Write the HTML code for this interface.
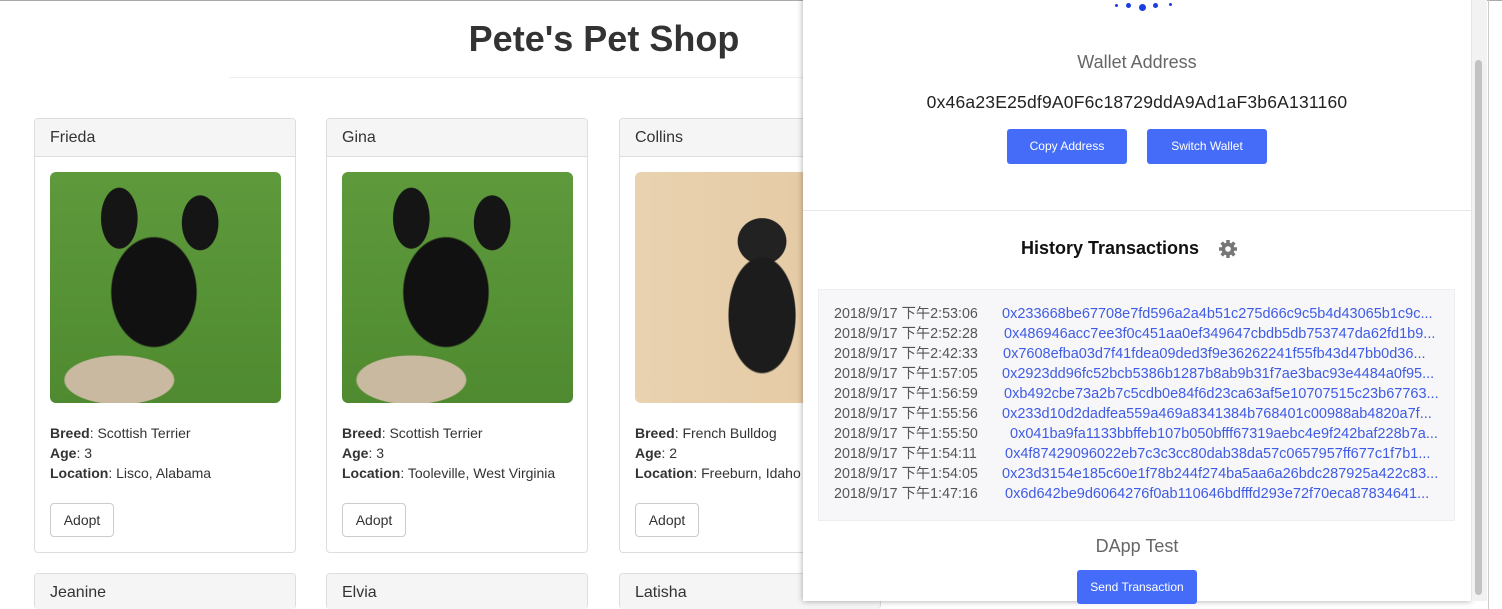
<!DOCTYPE html><html><head><meta charset="utf-8"><style>
html{height:609px;overflow:hidden}
body{margin:0;width:1502px;height:609px;overflow:hidden;background:#fff;font-family:"Liberation Sans",Arial,sans-serif;color:#333;position:relative}
.topl{position:absolute;left:0;top:0;width:1502px;height:1px;background:#aaa}
h1{position:absolute;left:0;width:1208px;top:18px;margin:0;text-align:center;font-size:36px;font-weight:bold;color:#333}
.hr{position:absolute;left:229px;top:77px;width:800px;height:1px;background:#eee}
.card{position:absolute;width:260px;height:433px;border:1px solid #ddd;border-radius:4px;background:#fff}
.card.s{height:35px;border-bottom:none;overflow:hidden}
.hd{height:37px;background:#f5f5f5;border-bottom:1px solid #ddd;font-size:16px;line-height:37px;padding-left:15px;color:#333;border-radius:4px 4px 0 0}
.img{position:absolute;left:15px;top:53px;width:231px;height:231px;border-radius:6px;overflow:hidden}
.terr{background:radial-gradient(ellipse 70px 90px at 45% 52%,#111 60%,transparent 62%),radial-gradient(ellipse 30px 50px at 30% 20%,#151515 60%,transparent 62%),radial-gradient(ellipse 30px 45px at 65% 22%,#151515 60%,transparent 62%),radial-gradient(ellipse 90px 40px at 30% 90%,#c9b9a0 60%,transparent 62%),linear-gradient(#5e9a3c,#4f8a30)}
.bull{background:radial-gradient(ellipse 55px 95px at 55% 62%,#1c1c1c 60%,transparent 62%),radial-gradient(ellipse 40px 38px at 55% 30%,#222 60%,transparent 62%),linear-gradient(90deg,#e9d2b0,#e4c9a2)}
.info{position:absolute;left:15px;top:304px;font-size:14px;line-height:20px}
.btn{position:absolute;left:15px;top:384px;width:62px;height:32px;border:1px solid #ccc;border-radius:4px;font-size:14px;line-height:32px;text-align:center}
.pop{position:absolute;left:803px;top:-2px;width:668px;height:603px;background:#fff;box-shadow:0 0 6px rgba(0,0,0,.35);font-family:"Liberation Sans","Noto Sans CJK SC",sans-serif}
.c{position:absolute;left:0;width:668px;text-align:center}
.bb{position:absolute;width:120px;height:35px;background:#456cf8;color:#fff;border-radius:3px;font-size:12px;line-height:35px;text-align:center}
.box{position:absolute;left:15px;top:291px;width:635px;height:230px;background:#f7f7f9;border:1px solid #eee}
.row{position:absolute;left:15px;font-size:14.3px;line-height:20px;white-space:nowrap;color:#555}
.row span{position:absolute;color:#3f5be5;font-size:14.5px}
.sb{position:absolute;left:1471px;top:0;width:15px;height:601px;background:#f2f2f2;border-left:1px solid #e5e5e5}
.th{position:absolute;left:1475px;top:60px;width:7px;height:535px;background:#c2c2c2;border-radius:4px}
.dot{position:absolute;background:#1a3fe0;border-radius:50%}
</style></head><body>
<div class="topl"></div>
<h1>Pete's Pet Shop</h1>
<div class="hr"></div>
<div class="card" style="left:34px;top:118px"><div class="hd">Frieda</div><div class="img terr"></div><div class="info"><b>Breed</b>: Scottish Terrier<br><b>Age</b>: 3<br><b>Location</b>: Lisco, Alabama</div><div class="btn">Adopt</div></div>
<div class="card" style="left:326px;top:118px"><div class="hd">Gina</div><div class="img terr"></div><div class="info"><b>Breed</b>: Scottish Terrier<br><b>Age</b>: 3<br><b>Location</b>: Tooleville, West Virginia</div><div class="btn">Adopt</div></div>
<div class="card" style="left:619px;top:118px"><div class="hd">Collins</div><div class="img bull"></div><div class="info"><b>Breed</b>: French Bulldog<br><b>Age</b>: 2<br><b>Location</b>: Freeburn, Idaho</div><div class="btn">Adopt</div></div>
<div class="card s" style="left:34px;top:573px"><div class="hd">Jeanine</div></div>
<div class="card s" style="left:326px;top:573px"><div class="hd">Elvia</div></div>
<div class="card s" style="left:619px;top:573px"><div class="hd">Latisha</div></div>
<div style="position:absolute;left:1488px;top:0;width:1px;height:609px;background:#ccc"></div>
<div class="pop">
<div class="dot" style="left:312px;top:6px;width:3px;height:3px"></div><div class="dot" style="left:323px;top:5px;width:5px;height:5px"></div><div class="dot" style="left:336px;top:6px;width:7px;height:7px"></div><div class="dot" style="left:350px;top:5px;width:5px;height:5px"></div><div class="dot" style="left:366px;top:5px;width:3px;height:3px"></div>
<div class="c" style="top:54px;font-size:18px;color:#666">Wallet Address</div>
<div class="c" style="top:94px;font-size:17.5px;color:#222;letter-spacing:0.2px">0x46a23E25df9A0F6c18729ddA9Ad1aF3b6A131160</div>
<div class="bb" style="left:204px;top:131px">Copy Address</div>
<div class="bb" style="left:344px;top:131px">Switch Wallet</div>
<div style="position:absolute;left:0;top:212px;width:668px;height:1px;background:#e8e8e8"></div>
<div style="position:absolute;left:218px;top:240px;font-size:18px;font-weight:bold;color:#111">History Transactions</div>
<svg style="position:absolute;left:415px;top:241px" width="20" height="20" viewBox="0 0 20 20"><g fill="#777"><circle cx="10" cy="10" r="6.5"/><g stroke="#777" stroke-width="3.5"><line x1="10" y1="1" x2="10" y2="19"/><line x1="1" y1="10" x2="19" y2="10"/><line x1="3.6" y1="3.6" x2="16.4" y2="16.4"/><line x1="16.4" y1="3.6" x2="3.6" y2="16.4"/></g></g><circle cx="10" cy="10" r="2.8" fill="#fff"/></svg>
<div class="box">
<div class="row" style="top:14px">2018/9/17 下午2:53:06<span style="left:168px">0x233668be67708e7fd596a2a4b51c275d66c9c5b4d43065b1c9c...</span></div>
<div class="row" style="top:34px">2018/9/17 下午2:52:28<span style="left:170px">0x486946acc7ee3f0c451aa0ef349647cbdb5db753747da62fd1b9...</span></div>
<div class="row" style="top:54px">2018/9/17 下午2:42:33<span style="left:169px">0x7608efba03d7f41fdea09ded3f9e36262241f55fb43d47bb0d36...</span></div>
<div class="row" style="top:74px">2018/9/17 下午1:57:05<span style="left:168px">0x2923dd96fc52bcb5386b1287b8ab9b31f7ae3bac93e4484a0f95...</span></div>
<div class="row" style="top:94px">2018/9/17 下午1:56:59<span style="left:170px">0xb492cbe73a2b7c5cdb0e84f6d23ca63af5e10707515c23b67763...</span></div>
<div class="row" style="top:114px">2018/9/17 下午1:55:56<span style="left:168px">0x233d10d2dadfea559a469a8341384b768401c00988ab4820a7f...</span></div>
<div class="row" style="top:134px">2018/9/17 下午1:55:50<span style="left:176px">0x041ba9fa1133bbffeb107b050bfff67319aebc4e9f242baf228b7a...</span></div>
<div class="row" style="top:154px">2018/9/17 下午1:54:11<span style="left:171px">0x4f87429096022eb7c3c3cc80dab38da57c0657957ff677c1f7b1...</span></div>
<div class="row" style="top:174px">2018/9/17 下午1:54:05<span style="left:168px">0x23d3154e185c60e1f78b244f274ba5aa6a26bdc287925a422c83...</span></div>
<div class="row" style="top:194px">2018/9/17 下午1:47:16<span style="left:171px">0x6d642be9d6064276f0ab110646bdfffd293e72f70eca87834641...</span></div>
</div>
<div class="c" style="top:538px;font-size:18px;color:#666">DApp Test</div>
<div class="bb" style="left:274px;top:572px;height:34px">Send Transaction</div>
</div>
<div class="sb"></div><div class="th"></div>
</body></html>
